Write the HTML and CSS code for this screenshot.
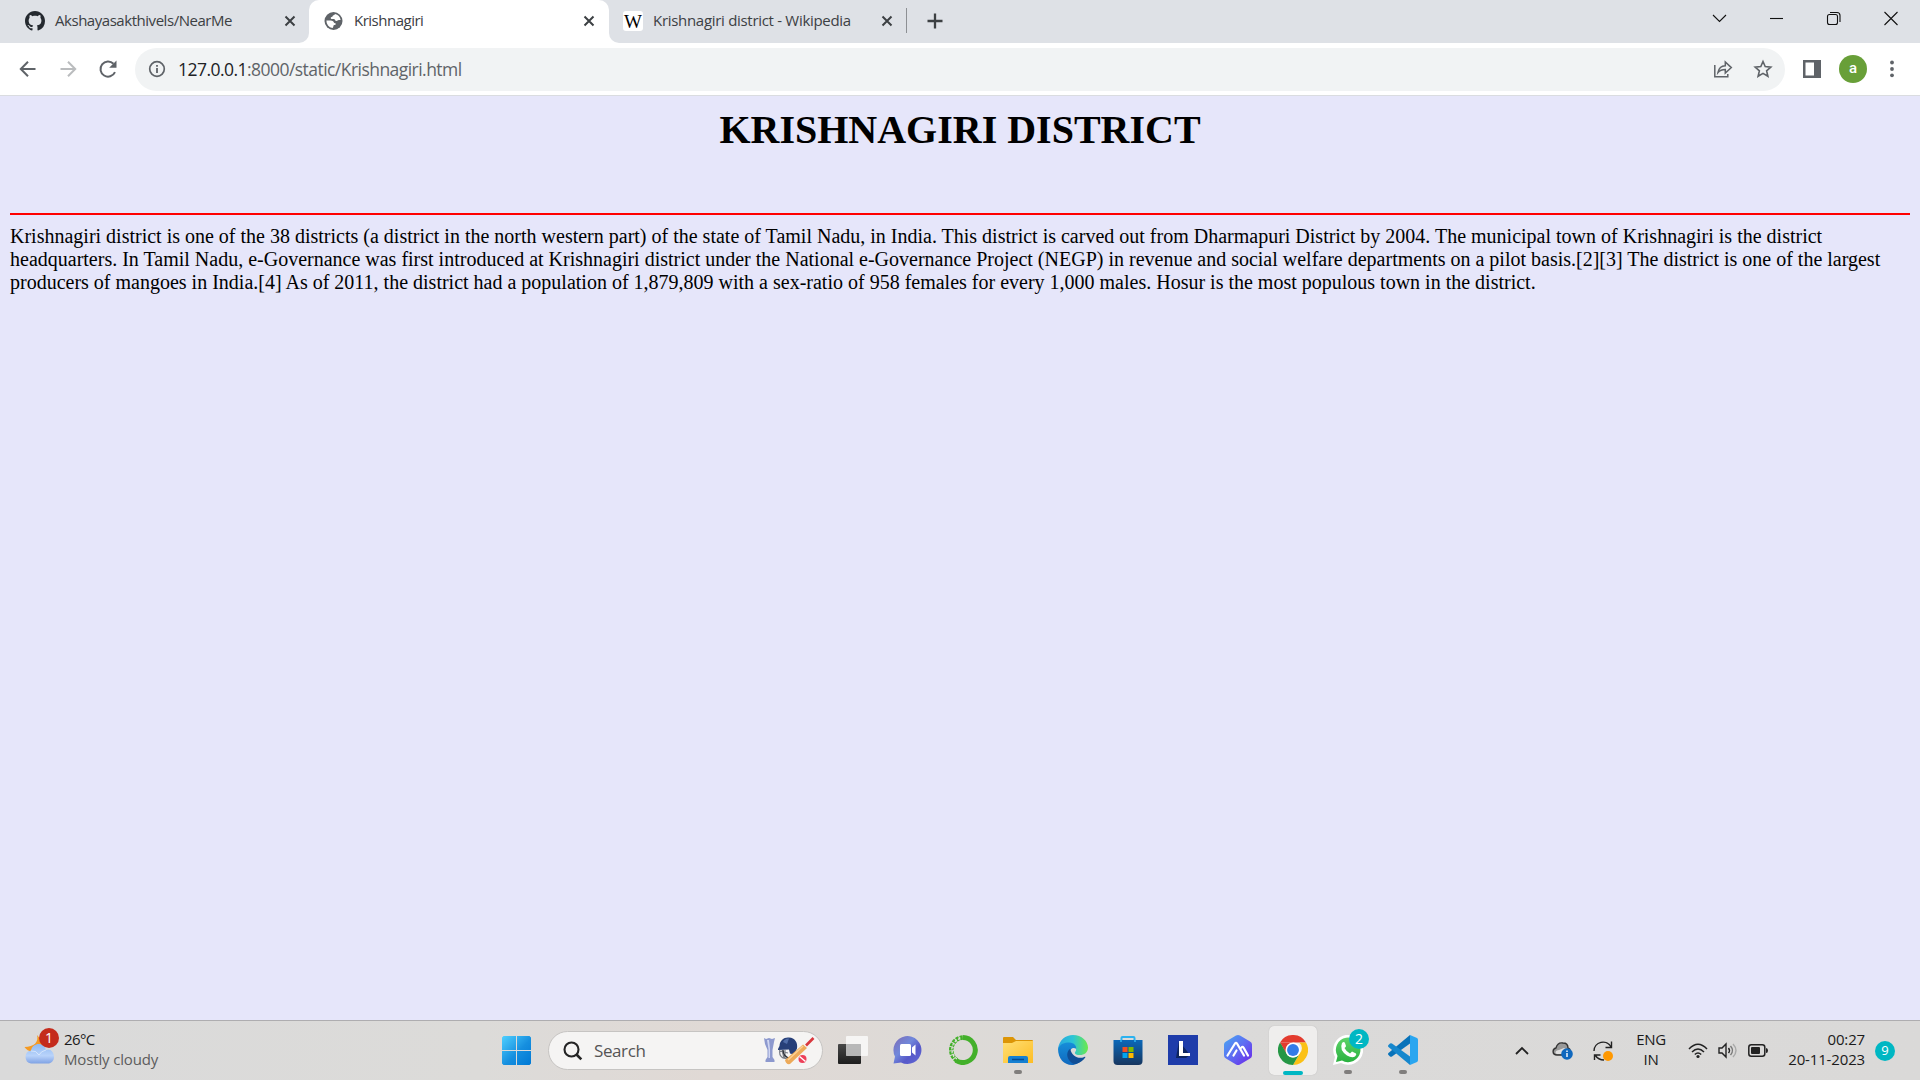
FILE: index.html
```html
<!DOCTYPE html>
<html lang="en">
<head>
<meta charset="utf-8">
<title>Krishnagiri</title>
<link rel="stylesheet" href="styles.css">
</head>
<body>
<header class="tabstrip">
  <div class="tab tab-first">
    <svg class="favicon" width="20" height="20" viewBox="0 0 16 16"><path fill="#24292f" d="M8 0C3.58 0 0 3.58 0 8c0 3.54 2.29 6.53 5.47 7.59.4.07.55-.17.55-.38 0-.19-.01-.82-.01-1.49-2.01.37-2.53-.49-2.69-.94-.09-.23-.48-.94-.82-1.13-.28-.15-.68-.52-.01-.53.63-.01 1.08.58 1.23.82.72 1.21 1.87.87 2.33.66.07-.52.28-.87.51-1.07-1.78-.2-3.64-.89-3.64-3.95 0-.87.31-1.59.82-2.15-.08-.2-.36-1.02.08-2.12 0 0 .67-.21 2.2.82.64-.18 1.32-.27 2-.27s1.36.09 2 .27c1.53-1.04 2.2-.82 2.2-.82.44 1.1.16 1.92.08 2.12.51.56.82 1.27.82 2.15 0 3.07-1.87 3.75-3.65 3.95.29.25.54.73.54 1.48 0 1.07-.01 1.93-.01 2.2 0 .21.15.46.55.38A8.01 8.01 0 0 0 16 8c0-4.42-3.58-8-8-8z"/></svg>
    <span class="tab-title t1">Akshayasakthivels/NearMe</span>
    <svg class="tab-close" width="12" height="12" viewBox="0 0 12 12"><path d="M1.5 1.5l9 9M10.5 1.5l-9 9"/></svg>
  </div>
  <div class="tab tab-active">
    <svg class="favicon" width="20" height="20" viewBox="0 0 20 20"><circle cx="9.500" cy="10" r="9" fill="#5f6368"/><path fill="#fff" d="M11 2.600C9.500 3 9 3.500 9 4.600 9 6 7.500 5.600 7.200 6.600c-.2 1 .3 1.500 1.500 1.500h2.600c1 0 .9 1.900 2 1.900h3.400A7.200 7.200 0 0 1 11 17v-1.500c-1.500 0-2-.8-2-2v-1L4.200 9.600 2.400 9.400C2.400 5 7 1.700 11 2.600z" opacity="0"/><path fill="#fff" d="M2.400 9.600c2.600-.1 5-.1 6.200.4 1.300.5 1 2.200 2.600 2.200.9.100.7 1.300.1 1.600-1 .4-1.800.1-1.900 1.300-.1 1-.4 1.800-1 1.900A7.200 7.200 0 0 1 2.400 9.600zM11 3c-.3 1.300-2.300 1-2.400 2.200-.1 1-1.800.6-1.900 1.700-.1 1 1.500 1.300 3 1.200 1.400-.1 1.300 2 2.600 2 1.200 0 1.400-1 2.500-1l1.800-.2A7.200 7.200 0 0 0 11 3z"/></svg>
    <span class="tab-title t2">Krishnagiri</span>
    <svg class="tab-close" width="12" height="12" viewBox="0 0 12 12"><path d="M1.500 1.500l9 9M10.500 1.500l-9 9"/></svg>
  </div>
  <div class="tab tab-last">
    <span class="favicon wiki">W</span>
    <span class="tab-title t3">Krishnagiri district - Wikipedia</span>
    <svg class="tab-close" width="12" height="12" viewBox="0 0 12 12"><path d="M1.500 1.500l9 9M10.500 1.500l-9 9"/></svg>
  </div>
  <svg class="new-tab" width="18" height="18" viewBox="0 0 18 18"><path d="M9 1.500v15M1.500 9h15" stroke="#3c4043" stroke-width="2.300"/></svg>
  <div class="window-controls">
    <svg width="57" height="36" viewBox="0 0 57 36"><path d="M22 15l6.500 6.500L35 15"/></svg>
    <svg width="57" height="36" viewBox="0 0 57 36"><path d="M22 18.500h13"/></svg>
    <svg width="57" height="36" viewBox="0 0 57 36"><rect x="22.500" y="14.500" width="10" height="10" rx="2"/><path d="M25 12.500h7q3 0 3 3V22"/></svg>
    <svg width="57" height="36" viewBox="0 0 57 36"><path d="M22.500 12l13 13M35.500 12l-13 13"/></svg>
  </div>
</header>

<nav class="toolbar">
  <svg width="40" height="40" viewBox="0 0 40 40" fill="none" stroke="#5f6368" stroke-width="2"><path d="M27.500 20H13M20 12.800L12.800 20l7.200 7.200"/></svg>
  <svg width="40" height="40" viewBox="0 0 40 40" fill="none" stroke="#babcbe" stroke-width="2"><path d="M12.500 20H27M20 12.800l7.200 7.200-7.200 7.200"/></svg>
  <svg width="40" height="40" viewBox="0 0 40 40" fill="none" stroke="#5f6368" stroke-width="2"><path d="M27 23.200A7.600 7.600 0 1 1 25.500 14.700"/><path d="M28.500 11.500v7.300h-7.300z" fill="#5f6368" stroke="none"/></svg>
  <div class="omnibox">
    <svg width="18" height="18" viewBox="0 0 18 18"><circle cx="9" cy="9" r="7.300" fill="none" stroke="#5f6368" stroke-width="1.700"/><path d="M9 8v5M9 5v1.800" stroke="#5f6368" stroke-width="1.800"/></svg>
    <p class="url"><b>127.0.0.1</b>:8000/static/Krishnagiri.html</p>
    <svg class="share" width="20" height="20" viewBox="0 0 20 20" fill="none" stroke="#5f6368" stroke-width="1.500"><path d="M1.800 6v11.700h13V15"/><path d="M5 13.500c.8-4.500 3.500-6.700 7.300-6.800V3l6 5.600-6 5.400v-3.600c-3.300 0-5.500.9-7.300 3.100z"/></svg>
    <svg width="20" height="20" viewBox="0 0 20 20" fill="none" stroke="#5f6368" stroke-width="1.600"><path d="M10 2.500l2.200 5.100 5.600.5-4.200 3.700 1.300 5.500L10 14.400l-4.900 2.900 1.300-5.500-4.200-3.700 5.600-.5z"/></svg>
  </div>
  <svg class="panel" width="18" height="18" viewBox="0 0 18 18"><path fill="#5f6368" d="M0 0h18v18H0z"/><path fill="#fff" d="M2.500 2.500h8.500v13H2.500z"/></svg>
  <span class="avatar">a</span>
  <svg class="menu" width="6" height="18" viewBox="0 0 6 18" fill="#5f6368"><circle cx="3" cy="2.500" r="1.900"/><circle cx="3" cy="9" r="1.900"/><circle cx="3" cy="15.300" r="1.900"/></svg>
</nav>

<main class="page">
  <h1>KRISHNAGIRI DISTRICT</h1>
  <hr>
  <p>Krishnagiri district is one of the 38 districts (a district in the north western part) of the state of Tamil Nadu, in India. This district is carved out from Dharmapuri District by 2004. The municipal town of Krishnagiri is the district headquarters. In Tamil Nadu, e-Governance was first introduced at Krishnagiri district under the National e-Governance Project (NEGP) in revenue and social welfare departments on a pilot basis.[2][3] The district is one of the largest producers of mangoes in India.[4] As of 2011, the district had a population of 1,879,809 with a sex-ratio of 958 females for every 1,000 males. Hosur is the most populous town in the district.</p>
</main>

<footer class="taskbar">
  <div class="weather">
    <div class="weather-icon">
      <svg width="32" height="32" viewBox="0 0 32 32"><defs><linearGradient id="cloud" x2="0" y2="1"><stop stop-color="#8fbaf2"/><stop offset=".6" stop-color="#b9d3fa"/><stop offset="1" stop-color="#7fa2e4"/></linearGradient></defs><path fill="#f59a22" d="M13 3c2 7-3 12-12.500 12C3 19 8 21 13 18l8-6z"/><path fill="url(#cloud)" d="M7 31.500A6.600 6.600 0 0 1 7 18.500C9 10 20 10 22 18c4-2 8 2 8 7 0 4-3 6.500-6 6.500z"/><path fill="none" stroke="#e5effe" opacity=".7" d="M7 19q5-1 8 4 2-4 7-5"/></svg>
      <span class="badge badge-red">1</span>
    </div>
    <div class="weather-text"><span class="temp">26°C</span><span class="cond">Mostly cloudy</span></div>
  </div>

  <svg class="start" width="30" height="30" viewBox="0 0 30 30"><defs><linearGradient id="win" x2="1" y2="1"><stop stop-color="#4fd0ff"/><stop offset=".55" stop-color="#168fdf"/><stop offset="1" stop-color="#0078d4"/></linearGradient></defs><path fill="url(#win)" d="M1.500 0H14v14H0V1.500zM15 0h12.500L29 1.500V14H15zM0 15h14v14H1.500L0 27.500zM15 15h14v12.500L27.500 29H15z"/></svg>

  <div class="search">
    <svg width="20" height="20" viewBox="0 0 20 20" fill="none" stroke="#242424" stroke-width="2.100"><circle cx="8.500" cy="8.500" r="7"/><path d="M13.500 13.500l4.800 4.800" stroke-width="2.600"/></svg>
    <span>Search</span>
    <svg class="cricket" width="52" height="30" viewBox="0 0 52 30">
      <path fill="#8d99ce" d="M1 2l2 1 3-1 3 1 3-1-1 4-1.500 8v7l2 3v2h-9v-2l2-3v-7L2 8z"/><path fill="#d0d6f2" d="M4 4l1.500 9v9H7V13L6 4z"/>
      <path fill="none" stroke="#777c84" stroke-width="1.200" d="M17 14c-1 3 0 6 3 8l5 1M16 15l9 2M22 14v8M19 14l2 8"/>
      <path fill="none" stroke="#30343c" stroke-width="1.400" d="M20 14q0 7 8 9"/>
      <path fill="#273f78" d="M15 13l1.500-3C17 4 21 1 26 1.500c6 .5 9 5 8 11l-3 6-4-1-1-4-11 .5z"/><path fill="#4f6ca8" d="M20 6q2-4 6-3.500L24 8z"/>
      <path stroke="#d8373e" stroke-width="2.600" d="M43 9.500l7.500-7.500"/><path fill="#edaa59" d="M22 24L40 8.500l4 3.500-17 16q-4 1-5-4z"/><path stroke="#fbd294" stroke-width="1.500" d="M25 24L40 10"/>
      <circle cx="39.500" cy="23" r="4" fill="#ed4059"/><path stroke="#fff" stroke-width="1.500" d="M36.500 20.500l6 5"/>
    </svg>
  </div>

  <div class="apps">
    <div class="app"><svg viewBox="0 0 30 30"><defs><linearGradient id="tv" x2="0" y2="1"><stop stop-color="#484848"/><stop offset="1" stop-color="#1d1d1d"/></linearGradient></defs><rect y="9" width="23" height="20" rx="1" fill="url(#tv)"/><rect x="8" y="1" width="22" height="20" rx="1" fill="#fff" opacity=".72"/><path fill="#aaa" opacity=".55" d="M8 9h15v12H8z"/></svg></div>
    <div class="app"><svg viewBox="0 0 30 30"><defs><linearGradient id="chat" x2="1" y2="1"><stop stop-color="#7d6ab5"/><stop offset=".4" stop-color="#7188db"/><stop offset=".65" stop-color="#5759c9"/><stop offset="1" stop-color="#6067d6"/></linearGradient></defs><path fill="url(#chat)" d="M.5 28.500l1.500-7A14 14 0 1 1 8 27.500z"/><rect x="7" y="9" width="11" height="12" rx="1.500" fill="#fff"/><path fill="#fff" d="M19 12.500l3.500-3v11l-3.500-3z"/></svg></div>
    <div class="app"><svg viewBox="0 0 30 30" fill="none"><path stroke="#43b02a" stroke-width="5" d="M15 2.500A12.500 12.500 0 1 1 8 25.500"/><path stroke="#43b02a" stroke-width="4.500" stroke-dasharray="3 1" d="M9 25.500A12.500 12.500 0 0 1 15 2.500"/><path stroke="#dedddd" stroke-width="1.200" stroke-dasharray="2 2" d="M9 24A12 12 0 0 1 14 2.500M6 22A12 12 0 0 1 11 4"/></svg></div>
    <div class="app run"><svg viewBox="0 0 30 30"><defs><linearGradient id="fold" x2="1" y2="1"><stop stop-color="#ffdf75"/><stop offset="1" stop-color="#fdbd24"/></linearGradient></defs><path fill="#dc9506" d="M0 3q0-1 1-1h9l3 3h16q1 0 1 1v6H0z"/><path fill="url(#fold)" d="M0 8h9l4-2h17v22H0z"/><path fill="#1580d2" d="M5 28v-5q0-2 2-2h16q2 0 2 2v5z"/><path stroke="#064b91" stroke-width="1.500" d="M9 24.500h12"/></svg></div>
    <div class="app"><svg viewBox="0 0 24 24"><defs><linearGradient id="e1" x2="1"><stop stop-color="#29a7df"/><stop offset=".5" stop-color="#2cc5d6"/><stop offset="1" stop-color="#6bea4a"/></linearGradient><linearGradient id="e2" x2="0" y2="1"><stop stop-color="#168ed9"/><stop offset="1" stop-color="#1068be"/></linearGradient></defs><path fill="url(#e1)" d="M0 11C1 4 6 0 12 0c7 0 12 5 12 10 0 4-3 6-6.500 6-2.500 0-4-.8-4-1.700 0-.8 1-1.300 1-2.800 0-2-2-3.500-5-3.500C5 8 2 9 0 11z"/><path fill="url(#e2)" d="M0 11c2-4 5-5 9-5 4 0 6 3 5.500 5-2-1.500-5-.5-5 3 0 5 5 7 10 5-2 3-5 5-8.500 5C5 24 0 19 0 11z"/><path fill="#104e96" d="M9.800 11c-3 2-3 6-1 9 2 3 4 3.500 6 3 3-.7 5.500-3 7-5 .3-.5-.2-.8-.8-.5-4 2-10 0-11.200-6.500z"/></svg></div>
    <div class="app"><svg viewBox="0 0 30 30"><defs><linearGradient id="store" x2="0" y2="1"><stop stop-color="#0b68b9"/><stop offset="1" stop-color="#17365f"/></linearGradient></defs><path fill="none" stroke="#2bb2ef" stroke-width="2" d="M8.500 7V3q0-1 1-1h11q1 0 1 1v4"/><path fill="url(#store)" d="M.5 5h29v21q0 4-4 4h-21q-4 0-4-4z"/><path fill="none" stroke="#2bb2ef" stroke-width="1.600" d="M8 5v2M22 5v2"/><path fill="#f25022" d="M9.500 12h5v5h-5z"/><path fill="#7fba00" d="M15.500 12h5v5h-5z"/><path fill="#00a4ef" d="M9.500 18h5v5h-5z"/><path fill="#ffb900" d="M15.500 18h5v5h-5z"/></svg></div>
    <div class="app"><svg viewBox="0 0 30 30"><path fill="#1e3caa" d="M0 0h30v30H0z"/><path fill="#0d245f" d="M11 6l-3 17h10l4-3z"/><path fill="#fff" d="M11 6h4v12h7v3H11z"/></svg></div>
    <div class="app"><svg viewBox="0 0 30 30"><defs><linearGradient id="hex" x2="1" y2="1"><stop stop-color="#46a9f2"/><stop offset=".5" stop-color="#5f6cf2"/><stop offset="1" stop-color="#6b22e8"/></linearGradient></defs><path fill="url(#hex)" d="M13 .5q2-1 4 0l10 6q2 1 2 3v11q0 2-2 3l-10 6q-2 1-4 0l-10-6q-2-1-2-3v-11q0-2 2-3z"/><path fill="none" stroke="#fff" stroke-width="2.200" stroke-linecap="round" stroke-linejoin="round" d="M4.500 20.500L12 8.500q1-1.500 2 0l7 12M10.500 20.500l3-5M18.500 12.500q1-1.500 2 0l4.500 8"/></svg></div>
    <div class="app current"><svg viewBox="0 0 48 48"><path fill="#e33b2e" d="M3.200 12A24 24 0 0 1 44.800 12H24z"/><path fill="#fbc116" d="M44.800 12A24 24 0 0 1 24 48l10.400-18A12 12 0 0 0 34 12z"/><path fill="#269746" d="M3.200 12A24 24 0 0 0 24 48l10.400-18A12 12 0 0 1 13.600 30z"/><path fill="#e33b2e" d="M3.200 12L13.600 30 24 12z"/><path fill="#269746" d="M3.200 12L13.600 30l-4 4z"/><circle cx="24" cy="24" r="12" fill="#fff"/><circle cx="24" cy="24" r="9.500" fill="#347be8"/></svg></div>
    <div class="app run"><svg viewBox="0 0 30 30"><defs><linearGradient id="wa" x2="0" y2="1"><stop stop-color="#5fd46a"/><stop offset="1" stop-color="#2ab13f"/></linearGradient></defs><path fill="#fff" d="M0 30l2-8A15 15 0 1 1 8 28z"/><path fill="url(#wa)" d="M3 27l1.500-6A12.300 12.300 0 1 1 9 25.500z"/><path fill="#fff" d="M9 8q2-2 3 0l1 3q0 1-1.500 2 2 4 5.500 5.500l2-2 4 2q1 1-1 3-3 2-8-1Q6 15 9 8z"/></svg><span class="badge badge-teal">2</span></div>
    <div class="app run"><svg viewBox="0 0 30 30"><path fill="#0872b9" d="M22 0v8.500L4 21.500q-1 .7-2 0L.5 20q-1-1 0-2z"/><path fill="#1687cd" d="M22 30v-8.500L4 8.500q-1-.7-2 0L.5 10q-1 1 0 2z"/><path fill="#2aa6f0" d="M22 0l7 3q1 .5 1 2v20q0 1.500-1 2l-7 3z"/></svg></div>
  </div>

  <div class="tray">
    <svg class="up" width="14" height="10" viewBox="0 0 14 10"><path d="M1 8l6-6 6 6" fill="none" stroke="#222" stroke-width="1.800"/></svg>
    <svg class="cloud" width="21" height="18" viewBox="0 0 21 18"><path fill="#999" stroke="#333" stroke-width="1.400" d="M5 13C0 13 0 7 4 6c1-4 4-5.500 7-5 4 0 5 3 5 5 3 1 3 7 0 7z"/><path fill="#e0e0e0" d="M5 12c-3-1-1-4 2-4l5-2 4 2-3 4z"/><circle cx="15" cy="12" r="5.800" fill="#0f68be"/><path stroke="#fff" stroke-width="1.400" d="M15 11v4M15 8.500V10"/></svg>
    <svg class="sync" width="22" height="22" viewBox="0 0 22 22" fill="none" stroke="#222" stroke-width="1.400"><path d="M2 11A9 9 0 0 1 19 7M19.500 1.500v6h-6M12 20c-4 0-7-2-9-5M2.500 20v-5h6"/><circle cx="16" cy="16" r="5" fill="#ff9800" stroke="none"/></svg>
    <div class="lang"><span>ENG</span><span>IN</span></div>
    <svg class="wifi" width="20" height="16" viewBox="0 0 20 16" fill="none" stroke="#222" stroke-width="1.500"><path d="M1 6Q10-3.500 19 6M4 9q6-6 12 0M6.800 11.500q3.200-3 6.400 0"/><circle cx="10" cy="13.500" r="1.600" fill="#222" stroke="none"/></svg>
    <svg class="sound" width="20" height="17" viewBox="0 0 20 17" fill="none" stroke="#222" stroke-width="1.400"><path d="M1 6v5h3l4 4V2L4 6zM10.500 6q2 2.500 0 5"/><path stroke="#777" d="M12.500 4q4 4.500 0 9"/><path stroke="#aaa" d="M15 2q6 6.500 0 13"/></svg>
    <svg class="battery" width="21" height="13" viewBox="0 0 21 13"><rect x=".8" y=".8" width="16" height="11.400" rx="2.500" fill="none" stroke="#222" stroke-width="1.500"/><rect x="3" y="3" width="9" height="7" rx="1" fill="#222"/><path fill="#222" d="M18 4q2 0 2 2.500T18 9z"/></svg>
    <div class="clock"><span class="time">00:27</span><span class="date">20-11-2023</span></div>
    <span class="badge-count">9</span>
  </div>
</footer>
</body>
</html>
```
FILE: styles.css
```css
* { box-sizing: border-box; }
body {
  margin: 0;
  width: 1920px;
  height: 1080px;
  overflow: hidden;
  display: flex;
  flex-direction: column;
  background: #e6e6fa;
  font-family: "Open Sans", "Noto Sans", sans-serif;
}
p { margin: 0; }
svg { display: block; flex: none; }

/* tab strip */
.tabstrip {
  height: 43px;
  flex: none;
  display: flex;
  background: linear-gradient(#fff, #fff) 299px 33px / 320px 10px no-repeat #dee1e6;
  color: #3c4043;
}
.tab {
  height: 43px;
  display: flex;
  align-items: center;
  font-size: 15px;
}
.tab-first { width: 309px; padding: 0 13px 2px 25px; background: #dee1e6; border-bottom-right-radius: 10px; }
.tab-active { width: 300px; padding: 0 14px 2px 15px; background: #fff; border-radius: 10px 10px 0 0; }
.tab-last { width: 298px; padding: 0 13px 2px 14px; background: #dee1e6; border-bottom-left-radius: 10px; }
.tab-last::after { content: ""; width: 1px; height: 25px; background: #8d9094; margin-left: 13px; margin-right: -13px; }
.tab-title { margin-left: 10px; padding-bottom: 2px; white-space: nowrap; }
.t1 { letter-spacing: -0.46px; }
.t2 { letter-spacing: -0.5px; }
.t3 { letter-spacing: -0.3px; }
.tab-close { margin-left: auto; fill: none; stroke: #3c4043; stroke-width: 2; }
.wiki {
  width: 20px;
  height: 20px;
  flex: none;
  border-radius: 3px;
  background: #fff;
  color: #000;
  text-align: center;
  font: 19px/21px "Liberation Serif", serif;
}
.new-tab { margin: 12px 0 0 19px; }
.window-controls {
  display: flex;
  margin-left: auto;
  margin-right: 1px;
}
.window-controls svg { fill: none; stroke: #111; stroke-width: 1.1; }

/* toolbar */
.toolbar {
  height: 53px;
  flex: none;
  display: flex;
  align-items: center;
  padding: 0 24px 0 8px;
  background: #fff;
  border-bottom: 1px solid #dadce0;
}
.omnibox {
  width: 1650px;
  height: 43px;
  margin-left: 7px;
  padding: 0 12px 0 13px;
  border-radius: 22px;
  display: flex;
  align-items: center;
  background: #f1f3f4;
}
.url { margin-left: 12px; font-size: 17.5px; letter-spacing: -0.54px; color: #5f6368; white-space: nowrap; }
.url b { font-weight: 400; color: #202124; }
.share { margin: 0 20px 0 auto; }
.panel { margin-left: 18px; }
.avatar {
  width: 28px;
  height: 28px;
  margin-left: 18px;
  border-radius: 50%;
  background: #689f38;
  color: #fff;
  text-align: center;
  font: 500 15px/27px Roboto, sans-serif;
}
.menu { margin-left: 22px; }

/* page */
.page {
  flex: 1;
  padding: 11px 10px 0;
  color: #000;
  font: 20px/23px "Liberation Serif", "Times New Roman", serif;
}
h1 { margin: 0; font-size: 40px; line-height: 45px; text-align: center; }
hr { margin: 61px 0 10px; border: 0; height: 2px; background: #f00; }

/* taskbar */
.taskbar {
  height: 60px;
  flex: none;
  display: flex;
  align-items: center;
  border-top: 1px solid #aeadb0;
  background: linear-gradient(90deg, #dadada, #dcdbd9 25%, #e0d9d5 37%, #dddad7 50%, #dbdad9 62%, #dad9d8);
  color: #1b1b1b;
  font-size: 15px;
}
.weather { width: 502px; display: flex; padding-left: 24px; align-items: center; }
.weather-icon { position: relative; margin-bottom: 5px; }
.badge {
  position: absolute;
  width: 20px;
  height: 20px;
  border-radius: 50%;
  color: #fff;
  text-align: center;
  font-size: 14px;
  line-height: 20px;
}
.badge-red { left: 15px; top: -4px; background: #c42b1c; }
.weather-text { margin-left: 8px; padding-bottom: 4px; display: flex; flex-direction: column; line-height: 20px; }
.temp { letter-spacing: -0.6px; }
.cond { color: #5d5d5d; letter-spacing: -0.15px; }
.search {
  width: 275px;
  height: 39px;
  margin: 0 2px 0 16px;
  padding: 0 7px 0 14px;
  border: 1px solid #c6c4c2;
  border-radius: 20px;
  display: flex;
  align-items: center;
  background: #f5f4f3;
  color: #555;
  font-size: 17px;
}
.search span { margin-left: 11px; padding-bottom: 1px; letter-spacing: -0.4px; }
.cricket { margin-left: auto; }
.apps { display: flex; height: 59px; }
.app {
  width: 55px;
  display: flex;
  justify-content: center;
  align-items: center;
  position: relative;
}
.app svg { width: 30px; height: 30px; margin-bottom: 1px; }
.run::after, .current::after {
  content: "";
  position: absolute;
  left: 24px;
  bottom: 6px;
  width: 8px;
  height: 4px;
  border-radius: 2px;
  background: #807e7d;
}
.current { width: 48px; height: 49px; margin: 5px 3px 0 4px; background: #efeeed; border-radius: 5px; box-shadow: 0 0 1px #aaa; }
.current::after { left: 14px; bottom: 0; width: 20px; background: #00b7c3; }
.badge-teal { left: 29px; top: 8px; background: #00b7c3; }

/* tray */
.tray { margin-left: auto; height: 59px; padding-right: 25px; display: flex; align-items: center; }
.up { margin-right: 23px; }
.cloud { margin-right: 19px; }
.sync { margin-right: 1px; }
.lang { width: 72px; padding-bottom: 3px; display: flex; flex-direction: column; line-height: 20px; text-align: center; letter-spacing: -0.3px; }
.wifi { margin-left: 1px; }
.sound { margin-left: 10px; }
.battery { margin-left: 10px; }
.clock { width: 96px; padding-bottom: 4px; display: flex; flex-direction: column; line-height: 20px; text-align: right; letter-spacing: -0.15px; }
.badge-count {
  width: 20px;
  height: 20px;
  margin-left: 10px;
  border-radius: 50%;
  background: #00b7c3;
  color: #fff;
  text-align: center;
  font-size: 13px;
  line-height: 19px;
}
```
